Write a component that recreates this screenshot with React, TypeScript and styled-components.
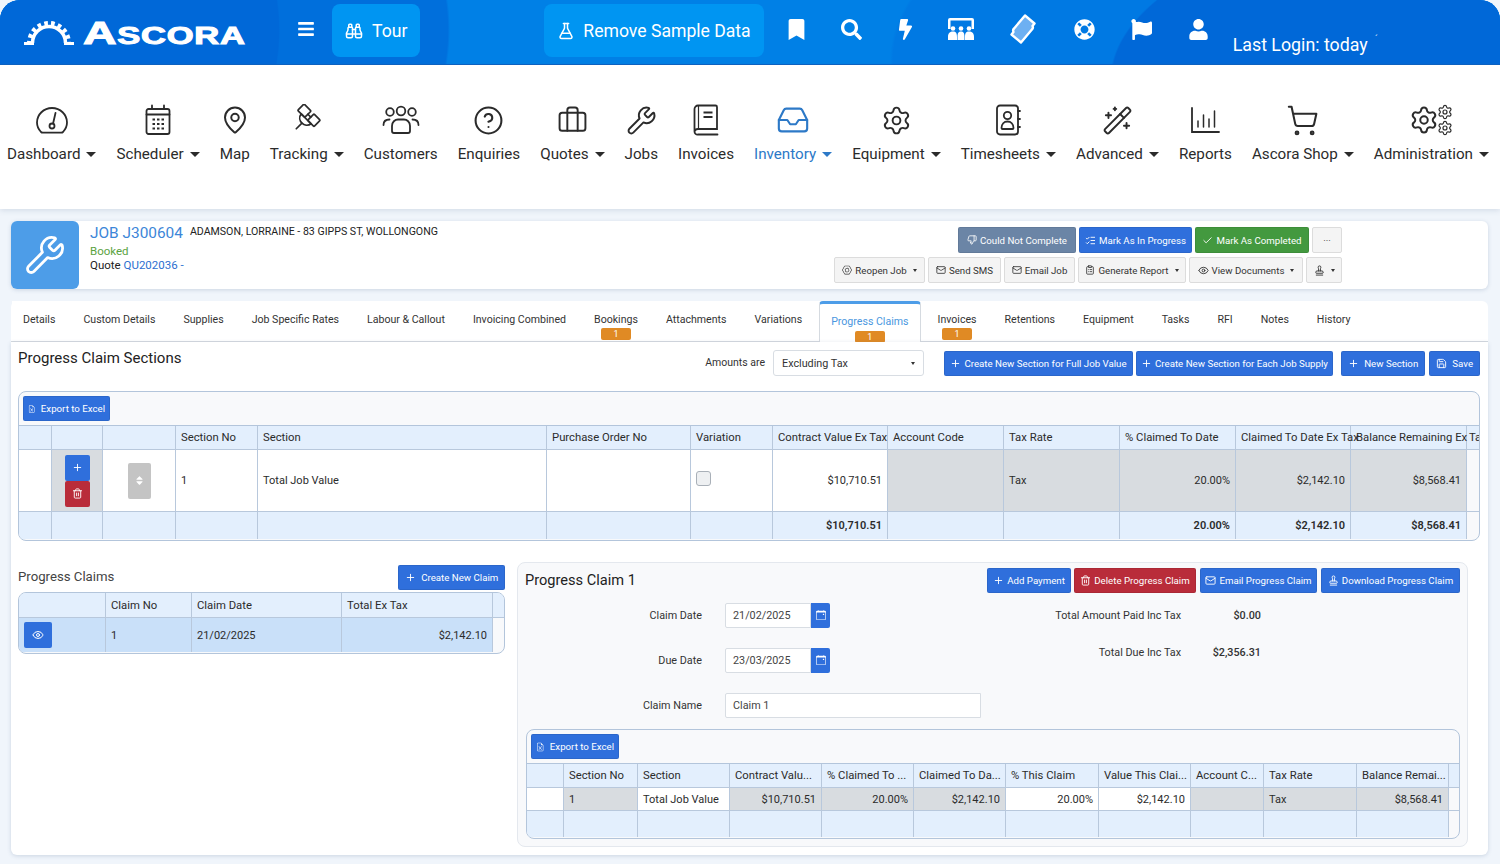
import React, { FC, ReactNode } from "react";
import styled, { createGlobalStyle } from "styled-components";
import {
    MapPin, Wrench, CircleHelp, Briefcase, Inbox, Settings, WandSparkles, ShoppingCart, FlaskConical, Binoculars,
    Check, Plus, Trash2, Mail, Eye, Save, ListChecks, ThumbsDown, ClipboardList, Stamp,
} from "lucide-react";
import { FaBars, FaBookmark, FaSearch, FaBolt, FaLifeRing, FaFlag, FaUser, FaSort } from "react-icons/fa";
import { BsNut, BsFileEarmarkExcel, BsCalendarEvent } from "react-icons/bs";

const GlobalStyle = createGlobalStyle`
    html, body {
        margin: 0;
        padding: 0;
        background: #f0f5fb;
        font-family: Roboto, "Liberation Sans", sans-serif;
        color: #333;
    }
    * { box-sizing: border-box; }
`;

const GaugeIcon = () => (
    <svg width="34" height="30" viewBox="0 0 34 30" fill="none" stroke="currentColor" strokeWidth="1.8" strokeLinecap="round">
        <path d="M6 27c-2.4-2.6-4-6-4-9.5C2 9.5 8.7 3 17 3s15 6.500 15 14.500c0 3.500-1.600 6.900-4 9.500-.5.500-1 .7-1.700.7H7.700C7 27.700 6.500 27.500 6 27z" />
        <path d="M20.500 8l-2.300 10" />
        <circle cx="17" cy="21" r="2.500" />
    </svg>
);

const CalendarIcon = () => (
    <svg width="28" height="32" viewBox="0 0 28 32" fill="none" stroke="currentColor" strokeWidth="1.8" strokeLinecap="round">
        <rect x="2.500" y="5" width="23" height="25" rx="2" />
        <path d="M8 1.500V5M20 1.500V5M2.500 10.500h23" />
        <path d="M8.500 15.500h2.500M13 15.500h2.500M17.500 15.500H20M8.500 20h2.500M13 20h2.500M17.500 20H20M8.500 24.500h2.500M13 24.500h2.500M17.500 24.500H20" strokeWidth="2.200" strokeLinecap="butt" />
    </svg>
);

const SatelliteIcon = () => (
    <svg width="32" height="32" viewBox="0 0 32 32" fill="none" stroke="currentColor" strokeWidth="1.700" strokeLinejoin="round" strokeLinecap="round">
        <g transform="translate(18 12) rotate(45)">
            <rect x="-12" y="-5" width="10" height="9" rx="1" />
            <rect x="2" y="-5" width="9" height="9" rx="1" />
            <path d="M-2 -.5H2" />
            <path d="M-7 4C-6 12 6 12 7 4z" />
            <path d="M0 10v8" />
        </g>
    </svg>
);

const PeopleIcon = () => (
    <svg width="38" height="30" viewBox="0 0 38 30" fill="none" stroke="currentColor" strokeWidth="1.800" strokeLinecap="round">
        <circle cx="8" cy="7" r="3.800" />
        <circle cx="19" cy="6" r="4.300" />
        <circle cx="30" cy="7" r="3.800" />
        <path d="M1.500 20c0-3.500 2.500-5.500 6-5.500M36.500 20c0-3.500-2.500-5.500-6-5.500" />
        <path d="M10 26v-5c0-4 3-6.500 6-6.500h6c3 0 6 2.500 6 6.500v5c0 1-.8 2-2 2H12c-1.200 0-2-1-2-2z" />
    </svg>
);

const BookIcon = () => (
    <svg width="26" height="32" viewBox="0 0 26 32" fill="none" stroke="currentColor" strokeWidth="1.800" strokeLinecap="round">
        <path d="M1.500 27V5a3.500 3.500 0 0 1 3.500-3.500h17.500a1.500 1.500 0 0 1 1.500 1.500v22H5a3.500 3.500 0 0 0-3.500 2.500A3 3 0 0 0 5 30.500h19.500" />
        <path d="M5.500 2v22.500" strokeWidth="1.200" />
        <path d="M10.500 8.500h9M10.500 13h9" strokeWidth="2" strokeLinecap="butt" />
    </svg>
);

const ContactBookIcon = () => (
    <svg width="26" height="32" viewBox="0 0 26 32" fill="none" stroke="currentColor" strokeWidth="1.800" strokeLinecap="round">
        <rect x="2" y="1.500" width="21" height="29" rx="3" />
        <circle cx="12.500" cy="11.500" r="3.700" />
        <path d="M6.500 24c0-4 2.500-6.500 6-6.500s6 2.500 6 6.500c0 .8-.5 1-1 1H7.500c-.5 0-1-.2-1-1z" />
        <path d="M23 7h2M23 15h2M23 23h2" />
    </svg>
);

const ChartIcon = () => (
    <svg width="30" height="28" viewBox="0 0 30 28" fill="none" stroke="currentColor" strokeWidth="1.800" strokeLinecap="round">
        <path d="M2 2v24h27" />
        <path d="M8 21v-6M13.500 21V9M19 21v-8M24.500 21V5" strokeWidth="1.500" />
    </svg>
);

const BoardIcon = () => (
    <svg width="26" height="22" viewBox="0 0 26 22" fill="#fff">
        <path d="M2 0h22a2 2 0 0 1 2 2v9h-2.500V2.500h-21V11H0V2a2 2 0 0 1 2-2z" />
        <circle cx="5" cy="10.500" r="2.300" /><circle cx="13" cy="10.500" r="2.300" /><circle cx="21" cy="10.500" r="2.300" />
        <path d="M0 19c0-4 2-5.500 5-5.500s4 1.500 4 5.500v3H0zM9.500 19c0-4 1-5.500 3.500-5.500s3.500 1.500 3.500 5.500v3h-7zM17 19c0-4 1-5.500 4-5.500s5 1.500 5 5.500v3h-9z" />
    </svg>
);

const TicketIcon = () => (
    <svg width="26" height="30" viewBox="0 0 26 30">
        <path d="M15 1.500l9.500 8-2 2.500c.8 1.500.5 2.500-.6 3.500L11 28.500 1.500 20.500l2-2.500c-.8-1.500-.5-2.500.6-3.500z" fill="#6db0f2" stroke="#fff" strokeWidth="2.400" strokeLinejoin="round" />
    </svg>
);

const GearArc = () => (
    <svg width="50" height="28" viewBox="0 0 50 28" fill="none" stroke="#fff" style={{ flexShrink: 0 }}>
        <path d="M8.500 25A16.500 16.500 0 0 1 41.500 25" strokeWidth="3.500" />
        <path d="M5.500 25A19.500 19.500 0 0 1 44.500 25" strokeWidth="5" strokeDasharray="3.600 3.200" strokeDashoffset="1.500" />
        <path d="M0 25.500h10M40 25.500h10" strokeWidth="3" />
    </svg>
);

const Page = styled.div`
    width: 1500px;
    height: 864px;
    overflow: hidden;
    display: flex;
    flex-direction: column;
`;

const Header = styled.header`
    height: 65px;
    flex-shrink: 0;
    display: flex;
    align-items: center;
    padding-left: 24px;
    color: #fff;
    border-radius: 20px 20px 0 0;
    border-bottom: 1px solid #0b62c4;
    background:
        radial-gradient(ellipse 390px 170px at 1500px 80px, #0068d8 99.500%, transparent 100%),
        radial-gradient(ellipse 610px 240px at 1500px 60px, #0079e3 99.500%, transparent 100%),
        radial-gradient(ellipse 280px 240px at 0 30px, #0068d8 99.500%, transparent 100%),
        radial-gradient(ellipse 450px 300px at 0 30px, #006fdc 99.500%, transparent 100%),
        #0080e6;
`;

const Logo = styled.div`
    display: flex;
    align-items: flex-end;
    gap: 9px;
    width: 222px;
    height: 28px;
`;

const LogoWord = styled.span`
    display: inline-block;
    margin-bottom: -2px;
    font-family: "Liberation Sans", sans-serif;
    font-weight: 700;
    font-size: 23px;
    line-height: 23px;
    letter-spacing: .5px;
    white-space: nowrap;
    transform: scaleX(1.5);
    transform-origin: left bottom;
    -webkit-text-stroke: 1px #fff;
`;

const LogoCap = styled.span`
    font-size: 31px;
`;

const MenuToggle = styled.span`
    display: flex;
    margin: -6px 17px 0 51px;
    font-size: 18px;
`;

const HeaderButton = styled.div`
    height: 53px;
    margin-top: -3px;
    padding: 0 13px;
    display: flex;
    align-items: center;
    gap: 9px;
    border-radius: 8px;
    background: #0095f2;
    font-size: 17.600px;
`;

const SampleButton = styled(HeaderButton)`
    margin-left: 124px;
    gap: 8px;
`;

const IconBar = styled.div`
    display: flex;
    align-items: center;
    gap: 34px;
    margin: -6px 0 0 22px;
`;

const IconSlot = styled.span<{ $ml?: number }>`
    display: flex;
    margin-left: ${p => p.$ml ?? 0}px;
`;

const LastLogin = styled.div`
    margin: 25px 0 0 24px;
    font-size: 17.800px;
    display: flex;
    gap: 7px;
`;

const Tick = styled.span`
    font-size: 10px;
    opacity: .8;
`;

const Nav = styled.nav`
    height: 144px;
    flex-shrink: 0;
    background: #fff;
    box-shadow: 0 1px 6px rgba(60, 90, 130, .18);
    display: flex;
    justify-content: space-between;
    padding: 39px 11px 0 7px;
`;

const NavItem = styled.div<{ $active?: boolean }>`
    display: flex;
    flex-direction: column;
    align-items: center;
    color: ${p => (p.$active ? "#2d79c7" : "#2b2b2b")};
`;

const NavIcon = styled.span`
    height: 32px;
    display: flex;
    align-items: center;
    justify-content: center;
`;

const NavLabel = styled.span`
    margin-top: 8px;
    font-size: 15.200px;
    line-height: 20px;
    display: flex;
    align-items: center;
    gap: 6px;
    white-space: nowrap;
`;

const Caret = styled.i`
    width: 0;
    height: 0;
    border-left: 5px solid transparent;
    border-right: 5px solid transparent;
    border-top: 5px solid currentColor;
`;

const GearStack = styled.span`
    display: flex;
    align-items: center;
`;

const SmallGears = styled.span`
    display: flex;
    flex-direction: column;
    margin-left: -2px;
`;

const Content = styled.main`
    flex: 1;
    padding: 12px 12px 0 11px;
    display: flex;
    flex-direction: column;
`;

const JobCard = styled.section`
    height: 68px;
    background: #fff;
    border-radius: 6px;
    box-shadow: 0 1px 4px rgba(60, 90, 130, .2);
    display: flex;
`;

const JobIcon = styled.div`
    width: 68px;
    background: #4d9de8;
    color: #fff;
    border-radius: 6px;
    display: flex;
    align-items: center;
    justify-content: center;
`;

const JobInfo = styled.div`
    flex: 1;
    padding: 3px 0 0 11px;
    font-size: 11.500px;
    color: #222;
`;

const JobTitleRow = styled.div`
    display: flex;
    align-items: flex-start;
    gap: 7px;
    height: 19px;
`;

const JobNumber = styled.span`
    font-size: 15.400px;
    line-height: 19px;
    color: #3c86d8;
`;

const JobCustomer = styled.span`
    font-size: 10.600px;
    line-height: 16px;
`;

const Booked = styled.div`
    margin-top: 1px;
    line-height: 14px;
    color: #5ba33f;
`;

const QuoteLine = styled.div`
    line-height: 14px;
`;

const QuoteLink = styled.span`
    color: #2d6fd0;
`;

const JobActions = styled.div`
    padding: 6px 146px 0 0;
    display: flex;
    flex-direction: column;
    align-items: flex-end;
    gap: 4px;
`;

const ButtonRow = styled.div`
    display: flex;
    gap: 3px;
`;

const variantColors: Record<string, string> = {
    primary: "#2f6fdc",
    danger: "#b92c3a",
    success: "#43993f",
    slate: "#6b85a6",
};

const Button = styled.div<{ $variant?: string; $w?: number; $ml?: number }>`
    height: 25px;
    padding: 0 4px;
    margin-left: ${p => p.$ml ?? 0}px;
    width: ${p => (p.$w ? `${p.$w}px` : "auto")};
    flex-shrink: 0;
    display: flex;
    align-items: center;
    justify-content: center;
    gap: 3px;
    white-space: nowrap;
    font-size: 9.700px;
    border-radius: 2px;
    background: ${p => (p.$variant ? variantColors[p.$variant] : "#f4f4f4")};
    color: ${p => (p.$variant ? "#fff" : "#333")};
    border: 1px solid ${p => (p.$variant ? "rgba(0,0,0,.08)" : "#dcdcdc")};
`;

const JobButton = styled(Button)`
    height: 26px;
`;

const SmallCaret = styled.i`
    margin-left: 3px;
    width: 0;
    height: 0;
    border-left: 2.500px solid transparent;
    border-right: 2.500px solid transparent;
    border-top: 3px solid currentColor;
`;

const TabBar = styled.div`
    margin-top: 12px;
    height: 41px;
    background: #fff;
    border-radius: 6px 6px 0 0;
    border-bottom: 1px solid #d5dae0;
    display: flex;
`;

const TabList = styled.div`
    margin-left: -2px;
    display: flex;
`;

const Tab = styled.div<{ $active?: boolean }>`
    margin: 0 3px;
    padding: ${p => (p.$active ? "11px 11px 0" : "12px 11px 0")};
    height: ${p => (p.$active ? "42px" : "40px")};
    font-size: 10.600px;
    line-height: 13px;
    display: flex;
    flex-direction: column;
    align-items: center;
    gap: ${p => (p.$active ? "3px" : "2px")};
    white-space: nowrap;
    background: #fff;
    color: ${p => (p.$active ? "#4a97e0" : "#333")};
    border-top: ${p => (p.$active ? "3px solid #4d9de8" : "0")};
    border-left: ${p => (p.$active ? "1px solid #d5dae0" : "0")};
    border-right: ${p => (p.$active ? "1px solid #d5dae0" : "0")};
    border-radius: ${p => (p.$active ? "4px 4px 0 0" : "0")};
`;

const TabBadge = styled.span`
    width: 30px;
    height: 12px;
    border-radius: 2px;
    background: #e08a24;
    color: #fff;
    font-size: 9px;
    line-height: 12px;
    text-align: center;
`;

const Panel = styled.section`
    flex: 1;
    background: #fff;
    margin-bottom: 9px;
    border-radius: 0 0 6px 6px;
    box-shadow: 0 1px 4px rgba(60, 90, 130, .2);
    padding: 8px 8px 0 7px;
`;

const SectionHead = styled.div`
    display: flex;
    align-items: flex-start;
    height: 41px;
`;

const PanelTitle = styled.h2<{ $size?: number }>`
    margin: -1px 0 0;
    flex: 1;
    font-size: ${p => p.$size ?? 15}px;
    line-height: 18px;
    font-weight: 400;
    color: #222;
`;

const AmountsLabel = styled.span`
    font-size: 10.500px;
    line-height: 26px;
    margin-right: 8px;
`;

const SelectBox = styled.div`
    width: 151px;
    height: 26px;
    padding: 0 8px;
    display: flex;
    align-items: center;
    justify-content: space-between;
    font-size: 10.800px;
    background: #fff;
    border: 1px solid #d8dde3;
    border-radius: 3px;
    margin-right: 20px;
`;

const SectionButtons = styled(ButtonRow)`
    margin-top: 1px;
`;

const TableCard = styled.div<{ $w?: number }>`
    width: ${p => (p.$w ? `${p.$w}px` : "auto")};
    background: #f8f9fb;
    border: 1px solid #b3c5db;
    border-radius: 8px;
    overflow: hidden;
`;

const GridToolbar = styled.div`
    height: 33px;
    padding: 4px 4px 0;
    display: flex;
`;

const GridRow = styled.div<{ $cols: string; $h: number; $kind?: string }>`
    display: grid;
    grid-template-columns: ${p => p.$cols};
    height: ${p => p.$h}px;
    border-top: ${p => (p.$kind === "head" ? "1px solid #b3c5db" : "0")};
    border-bottom: 1px solid ${p => (p.$kind === "foot" || p.$kind === "last" ? "transparent" : "#b8c8dc")};
    background: ${p => (p.$kind === "head" || p.$kind === "top" ? "#e3effd" : "transparent")};
    font-size: 11px;
    font-weight: ${p => (p.$kind === "foot" ? 600 : 400)};
`;

const cellColors: Record<string, string> = {
    foot: "#e3effd",
    off: "#d8dce0",
    on: "#fff",
    sel: "#c9e0f9",
    none: "transparent",
};

const Cell = styled.div<{ $tone?: string; $right?: boolean; $center?: boolean; $plain?: boolean }>`
    min-width: 0;
    padding: 0 5px;
    display: flex;
    align-items: center;
    justify-content: ${p => (p.$right ? "flex-end" : p.$center ? "center" : "flex-start")};
    white-space: nowrap;
    background: ${p => cellColors[p.$tone ?? "on"]};
    border-right: ${p => (p.$plain ? "0" : "1px solid #b8c8dc")};
    color: #2b2b2b;
`;

/* header cells keep no fill of their own: the long labels run into the next column, as in the real grid */
const HeadCell = styled(Cell)`
    padding-right: 0;
    background: transparent;
    font-size: 11.300px;
`;

const TailHeadCell = styled(HeadCell)`
    padding-left: 2px;
`;

const StackedButtons = styled.div`
    display: flex;
    flex-direction: column;
    align-items: center;
`;

const RowButton = styled.div<{ $variant: string }>`
    width: 25px;
    height: 26px;
    display: flex;
    align-items: center;
    justify-content: center;
    border-radius: 2px;
    color: #fff;
    background: ${p => variantColors[p.$variant]};
`;

const DragHandle = styled.div`
    width: 23px;
    height: 36px;
    border-radius: 2px;
    background: #c4c4c4;
    color: #fff;
    display: flex;
    align-items: center;
    justify-content: center;
`;

const CheckBox = styled.div`
    width: 15px;
    height: 15px;
    margin-top: -4px;
    border-radius: 3px;
    background: #eef0f2;
    border: 1px solid #a9b0b8;
`;

const EyeButton = styled(RowButton)`
    width: 28px;
`;

const Bottom = styled.div`
    margin-top: 21px;
    display: flex;
    align-items: flex-start;
    gap: 12px;
`;

const ClaimsColumn = styled.div`
    width: 487px;
    padding-top: 3px;
`;

const ClaimsHead = styled.div`
    display: flex;
    align-items: flex-start;
    justify-content: space-between;
    height: 27px;
`;

const ClaimsTitle = styled.span`
    font-size: 13.200px;
    line-height: 24px;
    color: #444;
`;

const ClaimPanel = styled.div`
    width: 951px;
    height: 285px;
    background: #f8f9fb;
    border: 1px solid #e4e8ee;
    border-radius: 8px;
    padding: 4px 7px 0 7px;
`;

const ClaimHead = styled.div`
    display: flex;
    align-items: center;
    justify-content: space-between;
    height: 26px;
`;

const FormArea = styled.div`
    display: flex;
    height: 116px;
    margin-top: 9px;
    padding-left: 1px;
`;

const FormColumn = styled.div`
    width: 456px;
    display: flex;
    flex-direction: column;
    gap: 19px;
`;

const FormRow = styled.div`
    display: grid;
    grid-template-columns: 176px 1fr;
    column-gap: 23px;
    align-items: center;
    height: 26px;
    font-size: 10.800px;
`;

const FormLabel = styled.label`
    text-align: right;
    color: #333;
`;

const DateField = styled.div`
    display: flex;
    width: 105px;
    height: 25px;
`;

const TextInput = styled.div<{ $w?: number }>`
    flex: 1;
    width: ${p => (p.$w ? `${p.$w}px` : "auto")};
    height: 25px;
    padding: 0 7px;
    line-height: 24px;
    background: #fff;
    border: 1px solid #d8dde3;
    border-radius: 2px 0 0 2px;
    font-size: 10.800px;
    color: #444;
`;

const CalendarButton = styled.div`
    width: 19px;
    display: flex;
    align-items: center;
    justify-content: center;
    color: #fff;
    background: #2f6fdc;
    border-radius: 0 2px 2px 0;
`;

const TotalsColumn = styled.div`
    display: flex;
    flex-direction: column;
    gap: 11px;
    font-size: 10.800px;
`;

const TotalRow = styled.div`
    display: grid;
    grid-template-columns: 199px 80px;
    height: 26px;
    align-items: center;
`;

const TotalLabel = styled.span`
    text-align: right;
    color: #333;
`;

const TotalValue = styled.span`
    text-align: right;
    font-weight: 500;
`;

const ClaimTable = styled(TableCard)`
    margin: 11px 0 0 1px;
`;

const sectionCols = "33px 51px 73px 82px 289px 144px 82px 115px 116px 116px 116px 115px 116px 12px";
const claimsCols = "87px 86px 150px 151px 12px";
const claimDetailCols = "37px 74px 92px 92px 92px 92px 93px 92px 73px 93px 92px 12px";

interface Col {
    label: string;
    row?: string;
    foot?: string;
    off?: boolean;
    right?: boolean;
}

const sectionColumns: Col[] = [
    { label: "Section No", row: "1" },
    { label: "Section", row: "Total Job Value" },
    { label: "Purchase Order No" },
    { label: "Variation" },
    { label: "Contract Value Ex Tax", row: "$10,710.51", foot: "$10,710.51", right: true },
    { label: "Account Code", off: true },
    { label: "Tax Rate", row: "Tax", off: true },
    { label: "% Claimed To Date", row: "20.00%", foot: "20.00%", right: true, off: true },
    { label: "Claimed To Date Ex Tax", row: "$2,142.10", foot: "$2,142.10", right: true, off: true },
    { label: "Balance Remaining Ex", row: "$8,568.41", foot: "$8,568.41", right: true, off: true },
];

const claimColumns: Col[] = [
    { label: "Section No", row: "1", off: true },
    { label: "Section", row: "Total Job Value" },
    { label: "Contract Valu...", row: "$10,710.51", right: true, off: true },
    { label: "% Claimed To ...", row: "20.00%", right: true, off: true },
    { label: "Claimed To Da...", row: "$2,142.10", right: true, off: true },
    { label: "% This Claim", row: "20.00%", right: true },
    { label: "Value This Clai...", row: "$2,142.10", right: true },
    { label: "Account C...", off: true },
    { label: "Tax Rate", row: "Tax", off: true },
    { label: "Balance Remai...", row: "$8,568.41", right: true, off: true },
];

const navItems: { label: string; icon: ReactNode; caret?: boolean; active?: boolean }[] = [
    { label: "Dashboard", icon: <GaugeIcon />, caret: true },
    { label: "Scheduler", icon: <CalendarIcon />, caret: true },
    { label: "Map", icon: <MapPin size={30} strokeWidth={1.6} /> },
    { label: "Tracking", icon: <SatelliteIcon />, caret: true },
    { label: "Customers", icon: <PeopleIcon /> },
    { label: "Enquiries", icon: <CircleHelp size={31} strokeWidth={1.6} /> },
    { label: "Quotes", icon: <Briefcase size={31} strokeWidth={1.5} />, caret: true },
    { label: "Jobs", icon: <Wrench size={31} strokeWidth={1.5} /> },
    { label: "Invoices", icon: <BookIcon /> },
    { label: "Inventory", icon: <Inbox size={34} strokeWidth={1.5} />, caret: true, active: true },
    { label: "Equipment", icon: <Settings size={31} strokeWidth={1.5} />, caret: true },
    { label: "Timesheets", icon: <ContactBookIcon />, caret: true },
    { label: "Advanced", icon: <WandSparkles size={31} strokeWidth={1.5} />, caret: true },
    { label: "Reports", icon: <ChartIcon /> },
    { label: "Ascora Shop", icon: <ShoppingCart size={33} strokeWidth={1.5} />, caret: true },
    {
        label: "Administration",
        icon: (
            <GearStack>
                <Settings size={30} strokeWidth={1.6} />
                <SmallGears>
                    <Settings size={16} strokeWidth={1.8} />
                    <Settings size={16} strokeWidth={1.8} />
                </SmallGears>
            </GearStack>
        ),
        caret: true,
    },
];

const tabs: { label: string; badge?: boolean; active?: boolean }[] = [
    { label: "Details" },
    { label: "Custom Details" },
    { label: "Supplies" },
    { label: "Job Specific Rates" },
    { label: "Labour & Callout" },
    { label: "Invoicing Combined" },
    { label: "Bookings", badge: true },
    { label: "Attachments" },
    { label: "Variations" },
    { label: "Progress Claims", badge: true, active: true },
    { label: "Invoices", badge: true },
    { label: "Retentions" },
    { label: "Equipment" },
    { label: "Tasks" },
    { label: "RFI" },
    { label: "Notes" },
    { label: "History" },
];

const ExportButton: FC<{ w: number }> = ({ w }) => (
    <Button $variant="primary" $w={w}>
        <BsFileEarmarkExcel size={10} /> &nbsp;Export to Excel
    </Button>
);

const App: FC = () => (
    <Page>
        <GlobalStyle />
        <Header>
            <Logo>
                <GearArc />
                <LogoWord><LogoCap>A</LogoCap>SCORA</LogoWord>
            </Logo>
            <MenuToggle><FaBars /></MenuToggle>
            <HeaderButton><Binoculars size={18} /> Tour</HeaderButton>
            <SampleButton><FlaskConical size={18} /> Remove Sample Data</SampleButton>
            <IconBar>
                <IconSlot><FaBookmark size={21} /></IconSlot>
                <IconSlot><FaSearch size={21} /></IconSlot>
                <IconSlot $ml={-1}><FaBolt size={21} /></IconSlot>
                <IconSlot $ml={-2}><BoardIcon /></IconSlot>
                <IconSlot $ml={2}><TicketIcon /></IconSlot>
                <IconSlot $ml={4}><FaLifeRing size={21} /></IconSlot>
                <IconSlot $ml={2}><FaFlag size={21} /></IconSlot>
                <IconSlot $ml={2}><FaUser size={21} /></IconSlot>
            </IconBar>
            <LastLogin>Last Login: today <Tick>´</Tick></LastLogin>
        </Header>

        <Nav>
            {navItems.map(item => (
                <NavItem key={item.label} $active={item.active}>
                    <NavIcon>{item.icon}</NavIcon>
                    <NavLabel>{item.label}{item.caret && <Caret />}</NavLabel>
                </NavItem>
            ))}
        </Nav>

        <Content>
            <JobCard>
                <JobIcon><Wrench size={42} strokeWidth={1.6} /></JobIcon>
                <JobInfo>
                    <JobTitleRow>
                        <JobNumber>JOB J300604</JobNumber>
                        <JobCustomer>ADAMSON, LORRAINE - 83 GIPPS ST, WOLLONGONG</JobCustomer>
                    </JobTitleRow>
                    <Booked>Booked</Booked>
                    <QuoteLine>Quote <QuoteLink>QU202036 -</QuoteLink></QuoteLine>
                </JobInfo>
                <JobActions>
                    <ButtonRow>
                        <JobButton $variant="slate" $w={118}><ThumbsDown size={10} /> Could Not Complete</JobButton>
                        <JobButton $variant="primary" $w={113}><ListChecks size={11} /> Mark As In Progress</JobButton>
                        <JobButton $variant="success" $w={114}><Check size={11} /> Mark As Completed</JobButton>
                        <JobButton $w={30}>···</JobButton>
                    </ButtonRow>
                    <ButtonRow>
                        <JobButton $w={91}><BsNut size={10} /> Reopen Job <SmallCaret /></JobButton>
                        <JobButton $w={73}><Mail size={10} /> Send SMS</JobButton>
                        <JobButton $w={71}><Mail size={10} /> Email Job</JobButton>
                        <JobButton $w={108}><ClipboardList size={10} /> Generate Report <SmallCaret /></JobButton>
                        <JobButton $w={114}><Eye size={11} /> View Documents <SmallCaret /></JobButton>
                        <JobButton $w={36}><Stamp size={11} /> <SmallCaret /></JobButton>
                    </ButtonRow>
                </JobActions>
            </JobCard>

            <TabBar>
                <TabList>
                    {tabs.map(tab => (
                        <Tab key={tab.label} $active={tab.active}>
                            {tab.label}
                            {tab.badge && <TabBadge>1</TabBadge>}
                        </Tab>
                    ))}
                </TabList>
            </TabBar>

            <Panel>
                <SectionHead>
                    <PanelTitle>Progress Claim Sections</PanelTitle>
                    <AmountsLabel>Amounts are</AmountsLabel>
                    <SelectBox>Excluding Tax <SmallCaret /></SelectBox>
                    <SectionButtons>
                        <Button $variant="primary" $w={189}><Plus size={11} /> Create New Section for Full Job Value</Button>
                        <Button $variant="primary" $w={197}><Plus size={11} /> Create New Section for Each Job Supply</Button>
                        <Button $variant="primary" $w={84} $ml={5}><Plus size={11} /> &nbsp;New Section</Button>
                        <Button $variant="primary" $w={51} $ml={1}><Save size={11} /> &nbsp;Save</Button>
                    </SectionButtons>
                </SectionHead>

                <TableCard>
                    <GridToolbar><ExportButton w={87} /></GridToolbar>
                    <GridRow $cols={sectionCols} $h={25} $kind="head">
                        <HeadCell />
                        <HeadCell />
                        <HeadCell />
                        {sectionColumns.map(c => <HeadCell key={c.label}>{c.label}</HeadCell>)}
                        <TailHeadCell $plain>Ta</TailHeadCell>
                    </GridRow>
                    <GridRow $cols={sectionCols} $h={62}>
                        <Cell />
                        <Cell $tone="off" $center>
                            <StackedButtons>
                                <RowButton $variant="primary"><Plus size={11} /></RowButton>
                                <RowButton $variant="danger"><Trash2 size={11} /></RowButton>
                            </StackedButtons>
                        </Cell>
                        <Cell $center><DragHandle><FaSort size={11} /></DragHandle></Cell>
                        {sectionColumns.map(c => (
                            <Cell key={c.label} $tone={c.off ? "off" : "on"} $right={c.right}>
                                {c.label === "Variation" ? <CheckBox /> : c.row}
                            </Cell>
                        ))}
                        <Cell $tone="none" $plain />
                    </GridRow>
                    <GridRow $cols={sectionCols} $h={28} $kind="foot">
                        <Cell $tone="foot" />
                        <Cell $tone="foot" />
                        <Cell $tone="foot" />
                        {sectionColumns.map(c => <Cell key={c.label} $tone="foot" $right={c.right}>{c.foot}</Cell>)}
                        <Cell $tone="none" $plain />
                    </GridRow>
                </TableCard>

                <Bottom>
                    <ClaimsColumn>
                        <ClaimsHead>
                            <ClaimsTitle>Progress Claims</ClaimsTitle>
                            <Button $variant="primary" $w={107}><Plus size={11} /> &nbsp;Create New Claim</Button>
                        </ClaimsHead>
                        <TableCard $w={487}>
                            <GridRow $cols={claimsCols} $h={25} $kind="top">
                                <HeadCell />
                                <HeadCell>Claim No</HeadCell>
                                <HeadCell>Claim Date</HeadCell>
                                <HeadCell>Total Ex Tax</HeadCell>
                                <HeadCell $plain />
                            </GridRow>
                            <GridRow $cols={claimsCols} $h={35} $kind="last">
                                <Cell $tone="sel"><EyeButton $variant="primary"><Eye size={12} /></EyeButton></Cell>
                                <Cell $tone="sel">1</Cell>
                                <Cell $tone="sel">21/02/2025</Cell>
                                <Cell $tone="sel" $right>$2,142.10</Cell>
                                <Cell $tone="none" $plain />
                            </GridRow>
                        </TableCard>
                    </ClaimsColumn>

                    <ClaimPanel>
                        <ClaimHead>
                            <PanelTitle $size={14.6}>Progress Claim 1</PanelTitle>
                            <ButtonRow>
                                <Button $variant="primary" $w={84}><Plus size={11} /> Add Payment</Button>
                                <Button $variant="danger" $w={122}><Trash2 size={11} /> Delete Progress Claim</Button>
                                <Button $variant="primary" $w={117} $ml={1}><Mail size={11} /> Email Progress Claim</Button>
                                <Button $variant="primary" $w={139} $ml={1}><Stamp size={11} /> Download Progress Claim</Button>
                            </ButtonRow>
                        </ClaimHead>
                        <FormArea>
                            <FormColumn>
                                <FormRow>
                                    <FormLabel>Claim Date</FormLabel>
                                    <DateField>
                                        <TextInput>21/02/2025</TextInput>
                                        <CalendarButton><BsCalendarEvent size={10} /></CalendarButton>
                                    </DateField>
                                </FormRow>
                                <FormRow>
                                    <FormLabel>Due Date</FormLabel>
                                    <DateField>
                                        <TextInput>23/03/2025</TextInput>
                                        <CalendarButton><BsCalendarEvent size={10} /></CalendarButton>
                                    </DateField>
                                </FormRow>
                                <FormRow>
                                    <FormLabel>Claim Name</FormLabel>
                                    <TextInput $w={256}>Claim 1</TextInput>
                                </FormRow>
                            </FormColumn>
                            <TotalsColumn>
                                <TotalRow>
                                    <TotalLabel>Total Amount Paid Inc Tax</TotalLabel>
                                    <TotalValue>$0.00</TotalValue>
                                </TotalRow>
                                <TotalRow>
                                    <TotalLabel>Total Due Inc Tax</TotalLabel>
                                    <TotalValue>$2,356.31</TotalValue>
                                </TotalRow>
                            </TotalsColumn>
                        </FormArea>
                        <ClaimTable>
                            <GridToolbar><ExportButton w={88} /></GridToolbar>
                            <GridRow $cols={claimDetailCols} $h={25} $kind="head">
                                <HeadCell />
                                {claimColumns.map(c => <HeadCell key={c.label}>{c.label}</HeadCell>)}
                                <HeadCell $plain />
                            </GridRow>
                            <GridRow $cols={claimDetailCols} $h={23}>
                                <Cell />
                                {claimColumns.map(c => (
                                    <Cell key={c.label} $tone={c.off ? "off" : "on"} $right={c.right}>{c.row}</Cell>
                                ))}
                                <Cell $tone="none" $plain />
                            </GridRow>
                            <GridRow $cols={claimDetailCols} $h={27} $kind="foot">
                                <Cell $tone="foot" />
                                {claimColumns.map(c => <Cell key={c.label} $tone="foot" />)}
                                <Cell $tone="none" $plain />
                            </GridRow>
                        </ClaimTable>
                    </ClaimPanel>
                </Bottom>
            </Panel>
        </Content>
    </Page>
);

export default App;
